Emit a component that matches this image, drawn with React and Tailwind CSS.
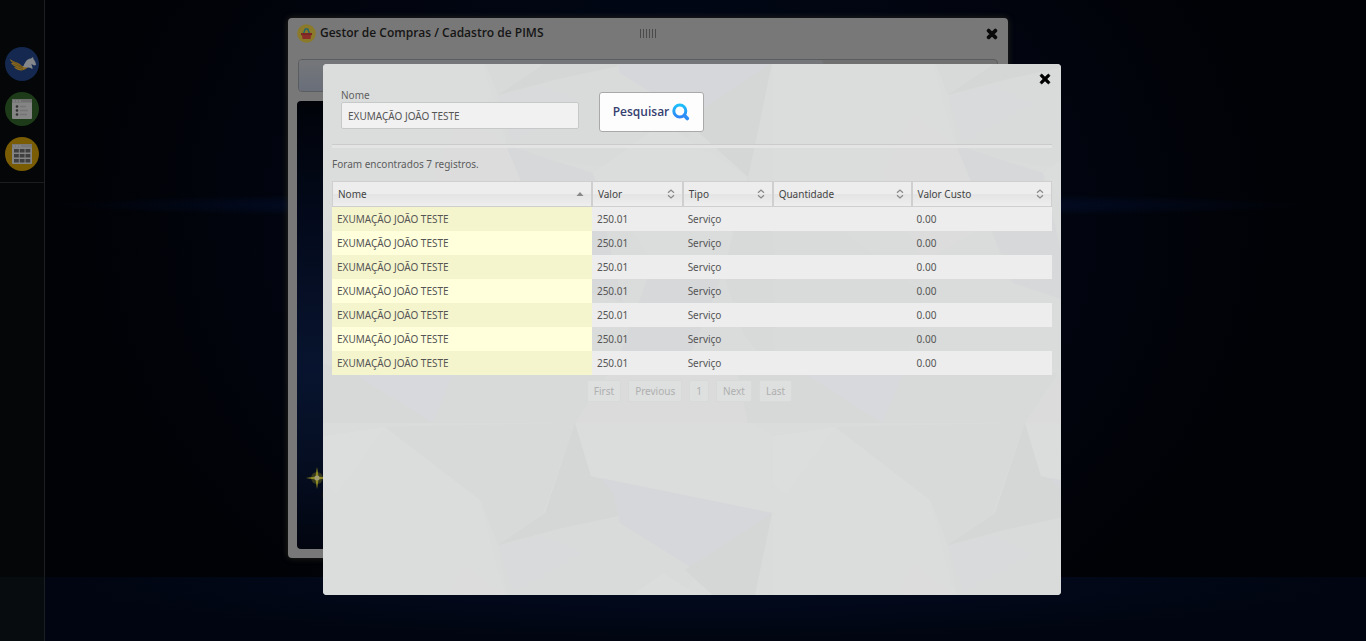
import { FaTimes } from 'react-icons/fa';

const rows = Array.from({ length: 7 }, () => ({ nome: 'EXUMAÇÃO JOÃO TESTE', valor: '250.01', tipo: 'Serviço', qtd: '', custo: '0.00' }));

const columns = [
  { label: 'Nome', width: 'w-[36.1%]', sorted: true },
  { label: 'Valor', width: 'w-[12.6%]' },
  { label: 'Tipo', width: 'w-[12.5%]' },
  { label: 'Quantidade', width: 'w-[19.3%]' },
  { label: 'Valor Custo', width: 'w-[19.5%]' },
];

function PegasusIcon() {
  return (
    <svg viewBox="0 0 34 34" className="size-[34px]" aria-hidden="true">
      <circle cx="17" cy="17" r="17" fill="#142850" />
      <path d="M5 12 C8 15 14 15 17 19 L23 20 C19 25 12 24 9 20 L11 20 C8 19 7 17 6 16 L8 16 C6 15 5 13 5 12Z" fill="#8a6a1f" />
      <path d="M7 14 L17 20 M8 17 L18 21 M10 20 L18 22.500" stroke="#5d4a1c" strokeWidth="0.700" />
      <path d="M18 20 C20 16 21 12 26 11.500 L28 10 L28.500 12 C30 14 31 16 31 18 L29 18.500 L26.500 17 C26.500 19 28 20 27.500 22 C25 20 22 21 18 20Z" fill="#83868a" />
    </svg>
  );
}

function ListIcon() {
  return (
    <svg viewBox="0 0 34 34" className="size-[34px]" aria-hidden="true">
      <circle cx="17" cy="17" r="17" fill="#1d3b18" />
      <rect x="7" y="7" width="20" height="20" rx="1" fill="#858585" />
      <path d="M7 7h20v3.500H7z" fill="#6f6f6f" />
      <path d="M8 9h2M11 9h2M14 9h2" stroke="#929292" />
      <g fill="#303030"><circle cx="12" cy="14.500" r="1.300" /><circle cx="12" cy="18.500" r="1.300" /><circle cx="12" cy="22.500" r="1.300" /></g>
      <path d="M15 14.500h6M15 18.500h8M15 22.500h7" stroke="#747474" strokeWidth="1.500" />
    </svg>
  );
}

function GridIcon() {
  return (
    <svg viewBox="0 0 34 34" className="size-[34px]" aria-hidden="true">
      <circle cx="17" cy="17" r="17" fill="#7a5c05" />
      <rect x="7" y="7" width="20" height="20" rx="1" fill="#848484" />
      <path d="M7 7h20v3.500H7z" fill="#777" />
      <path d="M8 9h2M11 9h2M14 9h2" stroke="#929292" />
      <g fill="#3f3f3f">
        {[12, 17, 22].map((y) => [9, 14.75, 20.5].map((x) => <rect key={x + '-' + y} x={x} y={y} width="4.800" height="3.500" />))}
      </g>
    </svg>
  );
}

function BasketIcon() {
  return (
    <svg viewBox="0 0 19 19" className="size-[19px]" aria-hidden="true">
      <circle cx="9.500" cy="9.500" r="9.300" fill="#8b7a2a" />
      <path d="M6.300 10 L8.300 5 h2.400 L12.700 10" fill="none" stroke="#27646b" strokeWidth="1.500" />
      <path d="M4 9h11v2.200H4z" fill="#7a2622" />
      <path d="M5 11h9l-.5 4H5.500z" fill="#8c2e28" />
    </svg>
  );
}

function SearchIcon() {
  return (
    <svg viewBox="0 0 18 18" className="size-[18px]" aria-hidden="true">
      <defs>
        <linearGradient id="lens" x1="0" y1="0" x2="0" y2="1"><stop offset="0" stopColor="#1cc0fb" /><stop offset="1" stopColor="#2f86f6" /></linearGradient>
      </defs>
      <circle cx="7.800" cy="8" r="6" fill="none" stroke="url(#lens)" strokeWidth="3" />
      <path d="M12.500 12.500 L15.300 15.500" stroke="#2f8df6" strokeWidth="3.600" strokeLinecap="round" />
    </svg>
  );
}

function SortIcon({ sorted }) {
  return (
    <svg viewBox="0 0 8 10" className="h-[10px] w-2 shrink-0" aria-hidden="true">
      {sorted ? <path d="M.5 7 L4 3 L7.500 7Z" fill="#888" /> : <path d="M1 3.700 L4 1 L7 3.700M1 6.300 L4 9 L7 6.300" fill="none" stroke="#8a8a8a" strokeWidth="1.300" />}
    </svg>
  );
}

function Facets() {
  return (
    <svg className="absolute inset-0 size-full" aria-hidden="true">
      <defs>
        <pattern id="facets" width="450" height="450" patternUnits="userSpaceOnUse" y="-91">
          <rect width="450" height="450" fill="#dadcdb" />
          <path d="M62 4 L252 0 L220 90 L175 122 L158 78Z" fill="#d8dad9" />
          <path d="M0 13 L62 4 L157 77 L176 150 L183 172 L160 250 L80 230 L0 172Z" fill="#dadddc" />
          <path d="M62 4 L0 90 L0 13Z" fill="#dbdedd" />
          <path d="M140 140 L110 200 L150 290 L215 250 L183 172Z" fill="#dcdcdc" />
          <path d="M0 60 L55 105 L60 200 L0 250Z" fill="#dbdddc" />
          <path d="M175 122 L235 106 L300 92 L374 150 L340 200 L250 190 L185 175Z" fill="#d9dbda" />
          <path d="M175 122 L220 112 L260 130 L190 170Z" fill="#d9dadb" />
          <path d="M252 0 L222 90 L175 122 L235 106 L300 92 L288 59 L268 53Z" fill="#d4d7d6" />
          <path d="M252 0 L268 53 L449 90 L450 13 L430 0Z" fill="#dbdddc" />
          <path d="M277 55 L449 90 L374 148 L297 100 L290 70Z" fill="#d6d7da" />
          <path d="M449 90 L432 172 L425 204 L362 147Z" fill="#d4d7d6" />
          <path d="M215 250 L183 172 L270 200 L300 330 L240 310Z" fill="#d7d8da" />
          <path d="M270 200 L340 150 L425 204 L400 300 L330 290Z" fill="#dbdcdc" />
          <path d="M330 290 L400 300 L360 400 L290 400Z" fill="#d7d8da" />
          <path d="M400 300 L425 204 L450 250 L450 400 L420 360Z" fill="#d8dad9" />
          <path d="M0 260 L60 250 L150 320 L130 400 L0 390Z" fill="#d9dbda" />
          <path d="M0 390 L30 400 L110 450 L0 450Z" fill="#d7d9d8" />
          <path d="M30 400 L110 450 L130 400 L90 380Z" fill="#d8d9dc" />
          <path d="M110 450 L130 400 L285 400 L252 450Z" fill="#d8dad9" />
          <path d="M252 450 L290 400 L415 390 L425 450Z" fill="#dbdbdb" />
          <path d="M425 450 L412 390 L450 380 L450 450Z" fill="#d7d9d8" />
        </pattern>
      </defs>
      <rect width="100%" height="100%" fill="url(#facets)" />
    </svg>
  );
}

function Sidebar() {
  return (
    <nav aria-label="Principal" className="relative flex w-[45px] shrink-0 flex-col border-r border-[#1c1f21] bg-[#040607]">
      <div className="flex flex-col items-center gap-[11px] border-b border-[#1b1d1f] pt-[47px] pb-[11px]">
        <button type="button" aria-label="Início"><PegasusIcon /></button>
        <button type="button" aria-label="Lista"><ListIcon /></button>
        <button type="button" aria-label="Grade"><GridIcon /></button>
      </div>
      <div className="mt-auto h-16 bg-[#070c0f]" />
    </nav>
  );
}

function DesktopWindow() {
  return (
    <section className="absolute top-[18px] left-[243px] flex h-[540px] w-[720px] flex-col rounded-[4px] bg-[#787878] px-[9px] pb-[9px] shadow-[0_0_6px_#26261c]">
      <header className="flex h-[41px] items-start justify-between pt-[5px]">
        <h1 className="flex flex-1 items-center gap-1 text-[12px] leading-5 font-semibold text-[#151515]"><BasketIcon />Gestor de Compras / Cadastro de PIMS</h1>
        <div className="mt-[6px] flex gap-[2px]">
          {[0, 1, 2, 3, 4, 5].map((i) => <span key={i} className="h-[9px] w-px bg-[#4a4a4a]" />)}
        </div>
        <div className="flex flex-1 justify-end pt-[4px]">
          <button type="button" aria-label="Fechar janela" className="text-[14px] text-[#0a0a0a]"><FaTimes stroke="currentColor" strokeWidth="40" /></button>
        </div>
      </header>
      <div className="mx-px flex h-[33px] rounded-[4px] border border-[#5a5d60] bg-[#707070]">
        <div className="w-3/4 rounded-[3px] bg-linear-to-b from-[#757779] to-[#696e7a]" />
      </div>
      <div className="relative mt-[9px] flex-1 overflow-hidden rounded-[4px] bg-[linear-gradient(180deg,#010309_0%,#03091a_25%,#08142f_60%,#050e22_80%,#020510_100%)]">
        <svg viewBox="0 0 40 50" className="absolute bottom-[35px] left-[6px] h-[50px] w-10" aria-hidden="true">
          <circle cx="27" cy="31" r="8" fill="#17130f" />
          <circle cx="14" cy="14" r="6" fill="#6d6d20" opacity=".45" />
          <path d="M14 3 L15.500 12.500 L25 14 L15.500 15.500 L14 25 L12.500 15.500 L3 14 L12.500 12.500Z" fill="#8f8b22" />
          <circle cx="14" cy="14" r="2.500" fill="#a19e76" />
        </svg>
      </div>
    </section>
  );
}

function SearchDialog() {
  return (
    <div role="dialog" aria-label="Pesquisa de registros" className="absolute top-16 left-[278px] min-h-[531px] w-[738px] overflow-hidden rounded-[4px] bg-[#d9dcdb] font-['Noto_Sans','Open_Sans',sans-serif]">
      <Facets />
      <div className="relative px-[9px]">
        <div className="flex h-7 justify-end pt-2">
          <button type="button" aria-label="Fechar" className="h-[14px] text-[14px] text-black"><FaTimes stroke="currentColor" strokeWidth="30" /></button>
        </div>
        <form className="flex items-start gap-5 px-[9px] pb-3" onSubmit={(e) => e.preventDefault()}>
          <div className="-mt-1 flex w-[238px] flex-col">
            <label htmlFor="nome" className="text-[10px] leading-[14px] text-[#606060]">Nome</label>
            <input id="nome" defaultValue="EXUMAÇÃO JOÃO TESTE" className="h-[27px] rounded-[2px] border border-[#c6c9c8] bg-[#f1f1f1] px-[6px] text-[10px] text-[#555]" />
          </div>
          <button type="submit" className="flex h-10 w-[105px] items-center justify-center gap-[3px] rounded-[3px] border border-[#a9a9a9] bg-[#fdfdfd] font-['Open_Sans','Noto_Sans',sans-serif] text-[12px] font-semibold text-[#353f70]">Pesquisar<SearchIcon /></button>
        </form>
        <hr className="h-1 border-t border-[#c9cccb] bg-[#e4e4e4]" />
        <p className="pt-[9px] pb-[9px] text-[10px] leading-[15px] text-[#5c5c5c]">Foram encontrados 7 registros.</p>
        <table className="w-full table-fixed border-separate border-spacing-0 text-left text-[10px] text-[#555]">
          <thead>
            <tr className="h-[26px]">
              {columns.map((c) => (
                <th key={c.label} scope="col" aria-sort={c.sorted ? 'ascending' : undefined} className={`${c.width} border border-[#cfcfcf] bg-linear-to-b from-[#ededed] from-50% via-[#e4e4e4] via-50% to-[#eeeeee] px-[5px] py-0 font-normal text-[#444]`}>
                  <button type="button" className="flex w-full items-center justify-between pr-[2px]">{c.label}<SortIcon sorted={c.sorted} /></button>
                </th>
              ))}
            </tr>
          </thead>
          <tbody>
            {rows.map((r, i) => (
              <tr key={i} className="group h-6 odd:bg-[#ededed]">
                <td className="bg-[#ffffdc] px-[5px] py-0 group-odd:bg-[#f5f5cd]">{r.nome}</td>
                <td className="px-[5px] py-0">{r.valor}</td>
                <td className="px-[5px] py-0">{r.tipo}</td>
                <td className="px-[5px] py-0">{r.qtd}</td>
                <td className="px-[5px] py-0">{r.custo}</td>
              </tr>
            ))}
          </tbody>
        </table>
        <div className="flex justify-center gap-[7px] pt-[5px] pr-[5px] text-[10px] text-[#aeb0af]">
          {['First', 'Previous', '1', 'Next', 'Last'].map((p) => (
            <button key={p} type="button" className="h-[22px] rounded-[2px] border border-[#d8dad9] bg-[#dedfdf] px-[6px]">{p}</button>
          ))}
        </div>
      </div>
    </div>
  );
}

export default function App() {
  return (
    <div className="flex min-h-screen bg-[#010208] font-['Open_Sans','Noto_Sans',sans-serif]">
      <Sidebar />
      <main className="relative flex flex-1 flex-col bg-[radial-gradient(ellipse_48%_2%_at_48%_32%,#03123a,transparent),radial-gradient(ellipse_45%_75%_at_48%_35%,#020a20,#010206)]">
        <div className="mt-auto h-16 bg-[radial-gradient(ellipse_50%_100%_at_50%_0%,#030c22,#010511)]" />
        <DesktopWindow />
        <SearchDialog />
      </main>
    </div>
  );
}
